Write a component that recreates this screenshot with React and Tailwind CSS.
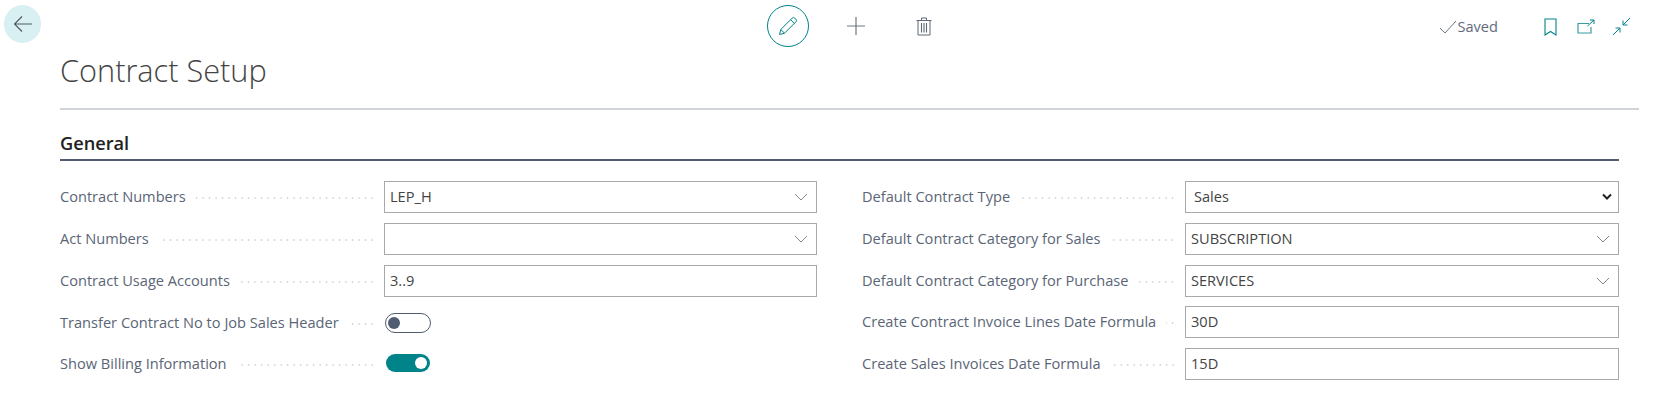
import React from "react";

const Chevron = () => (
  <svg width="14" height="8" viewBox="0 0 14 8" fill="none" stroke="#5f6b7a" strokeWidth="0.8" className="shrink-0">
    <path d="M1 1l6 6 6-6" />
  </svg>
);

const Dots = () => (
  <div className="flex-1 h-[4px] ml-[10px] mr-[7px] mt-[3px] bg-[radial-gradient(circle,#cfd2d7_0.8px,transparent_1.1px)] bg-[length:6.5px_4px] bg-repeat-x bg-right" />
);

const Label = ({ children, width = "w-[324px]" }) => (
  <div className={`flex items-center ${width} pr-[2px] pt-[1px]`}>
    <span className="text-[14.6px] text-[#5a6576] whitespace-nowrap">{children}</span>
    <Dots />
  </div>
);

const Box = ({ children, chevron }) => (
  <div className="flex-1 h-[32px] border border-[#a9a9a9] flex items-center justify-between pl-[5px] pr-[8px] text-[14.6px] text-[#444] bg-white">
    <span>{children}</span>
    {chevron && <Chevron />}
  </div>
);

const Row = ({ label, mb = "mb-[10px]", width, children }) => (
  <div className={`flex items-center h-[32px] ${mb}`}>
    <Label width={width}>{label}</Label>
    {children}
  </div>
);

const SelectBox = () => (
  <div className="flex-1 h-[32px] border border-[#a9a9a9] flex items-center justify-between pl-[8px] pr-[4px] text-[14.6px] text-[#444] bg-white">
    <span>Sales</span>
    <svg width="12" height="8" viewBox="0 0 12 8" fill="none" stroke="#222" strokeWidth="2" className="mr-[1px]">
      <path d="M2 1.5l4 4 4-4" />
    </svg>
  </div>
);

export default function App() {
  return (
    <div className="w-[1665px] h-[412px] bg-white overflow-hidden font-['Open_Sans',sans-serif]">
      <div className="grid grid-cols-[1fr_auto_1fr] items-start h-[46px] pl-[4px] pt-[5px]">
        <button className="w-[37px] h-[38px] rounded-full bg-[#d9f0f2] flex items-center justify-center">
          <svg width="20" height="18" viewBox="0 0 20 18" fill="none" stroke="#4f5a66" strokeWidth="1.1">
            <path d="M19 9H1.5M9 1.5L1.5 9 9 16.5" />
          </svg>
        </button>
        <div className="flex items-center ml-[30px]">
          <div className="w-[42px] h-[42px] rounded-full border border-[#008489] flex items-center justify-center">
            <svg width="20" height="20" viewBox="0 0 20 20" fill="none" stroke="#008489" strokeWidth="1">
              <path d="M1.5 18.5l1.3-5L14.2 2.1a1.8 1.8 0 0 1 2.6 0l1.1 1.1a1.8 1.8 0 0 1 0 2.6L6.5 17.2z" />
              <path d="M12.6 3.7l3.7 3.7M2.8 13.5l3.7 3.7" />
            </svg>
          </div>
          <svg width="20" height="20" viewBox="0 0 20 20" fill="none" stroke="#6f7783" strokeWidth="1.2" className="ml-[37px]">
            <path d="M10 1v18M1 10h18" />
          </svg>
          <svg width="16" height="19" viewBox="0 0 16 19" fill="none" stroke="#5f6875" strokeWidth="1" className="ml-[50px]">
            <path d="M0.5 3.5h15M5.5 3.5V1h5v2.5M2 3.5v14.5h12V3.5" />
            <path d="M5.5 6v9.5M8 6v9.5M10.5 6v9.5" strokeWidth="1.1" />
          </svg>
        </div>
        <div className="flex items-center justify-end pr-[34px] pt-[11px]">
          <svg width="18" height="14" viewBox="0 0 18 14" fill="none" stroke="#6b7583" strokeWidth="1">
            <path d="M1 8l5 5L17 1" />
          </svg>
          <span className="text-[14.6px] text-[#5f6b7d]">Saved</span>
          <svg width="13" height="18" viewBox="0 0 13 18" fill="none" stroke="#008489" strokeWidth="1.1" className="ml-[46px]">
            <path d="M1 1h11v16l-5.5-3.5L1 17z" />
          </svg>
          <svg width="18" height="15" viewBox="0 0 18 15" fill="none" stroke="#3a9da1" strokeWidth="1.2" className="ml-[20px]">
            <path d="M12 4.5H1v9.5h13V8" />
            <path d="M10.5 7L17 1M13 1h4v4" strokeWidth="1" stroke="#008489" />
          </svg>
          <svg width="19" height="19" viewBox="0 0 19 19" fill="none" stroke="#008489" strokeWidth="1" className="ml-[17px]">
            <path d="M18 1l-7 7M11 3.5V8h4.5M1 18l7-7M8 15.5V11H3.5" />
          </svg>
        </div>
      </div>

      <div className="pl-[60px] pr-[26px]">
        <h1 className="text-[30.7px] leading-[44px] font-light text-[#444] h-[62px] pt-[2px]">Contract Setup</h1>
        <div className="h-[1.5px] bg-[#d1d5da]" />
        <div className="pr-[20px]">
          <div className="h-[51px] border-b-2 border-[#505c6f] flex items-end pb-[4px]">
            <h2 className="text-[18.2px] leading-[24px] font-semibold text-[#212121]">General</h2>
          </div>
          <div className="grid grid-cols-[757px_1fr] gap-x-[45px] pt-[20px]">
            <div>
              <Row label="Contract Numbers"><Box chevron>LEP_H</Box></Row>
              <Row label="Act Numbers"><Box chevron /></Row>
              <Row label="Contract Usage Accounts"><Box>3..9</Box></Row>
              <Row label="Transfer Contract No to Job Sales Header" mb="mb-[9px]">
                <div className="ml-[1px] w-[46px] h-[20px] rounded-full border border-[#505c6f] flex items-center pl-[2px]">
                  <div className="w-[12px] h-[12px] rounded-full bg-[#505c6f]" />
                </div>
              </Row>
              <Row label="Show Billing Information" mb="mb-0">
                <div className="ml-[2px] w-[44px] h-[18px] -mt-[2px] rounded-full bg-[#008489] flex items-center justify-end pr-[3px]">
                  <div className="w-[12px] h-[12px] rounded-full bg-white" />
                </div>
              </Row>
            </div>
            <div>
              <Row label="Default Contract Type" width="w-[323px]"><SelectBox /></Row>
              <Row label="Default Contract Category for Sales" width="w-[323px]"><Box chevron>SUBSCRIPTION</Box></Row>
              <Row label="Default Contract Category for Purchase" width="w-[323px]" mb="mb-[9px]"><Box chevron>SERVICES</Box></Row>
              <Row label="Create Contract Invoice Lines Date Formula" width="w-[323px]"><Box>30D</Box></Row>
              <Row label="Create Sales Invoices Date Formula" width="w-[323px]" mb="mb-0"><Box>15D</Box></Row>
            </div>
          </div>
        </div>
      </div>
    </div>
  );
}
